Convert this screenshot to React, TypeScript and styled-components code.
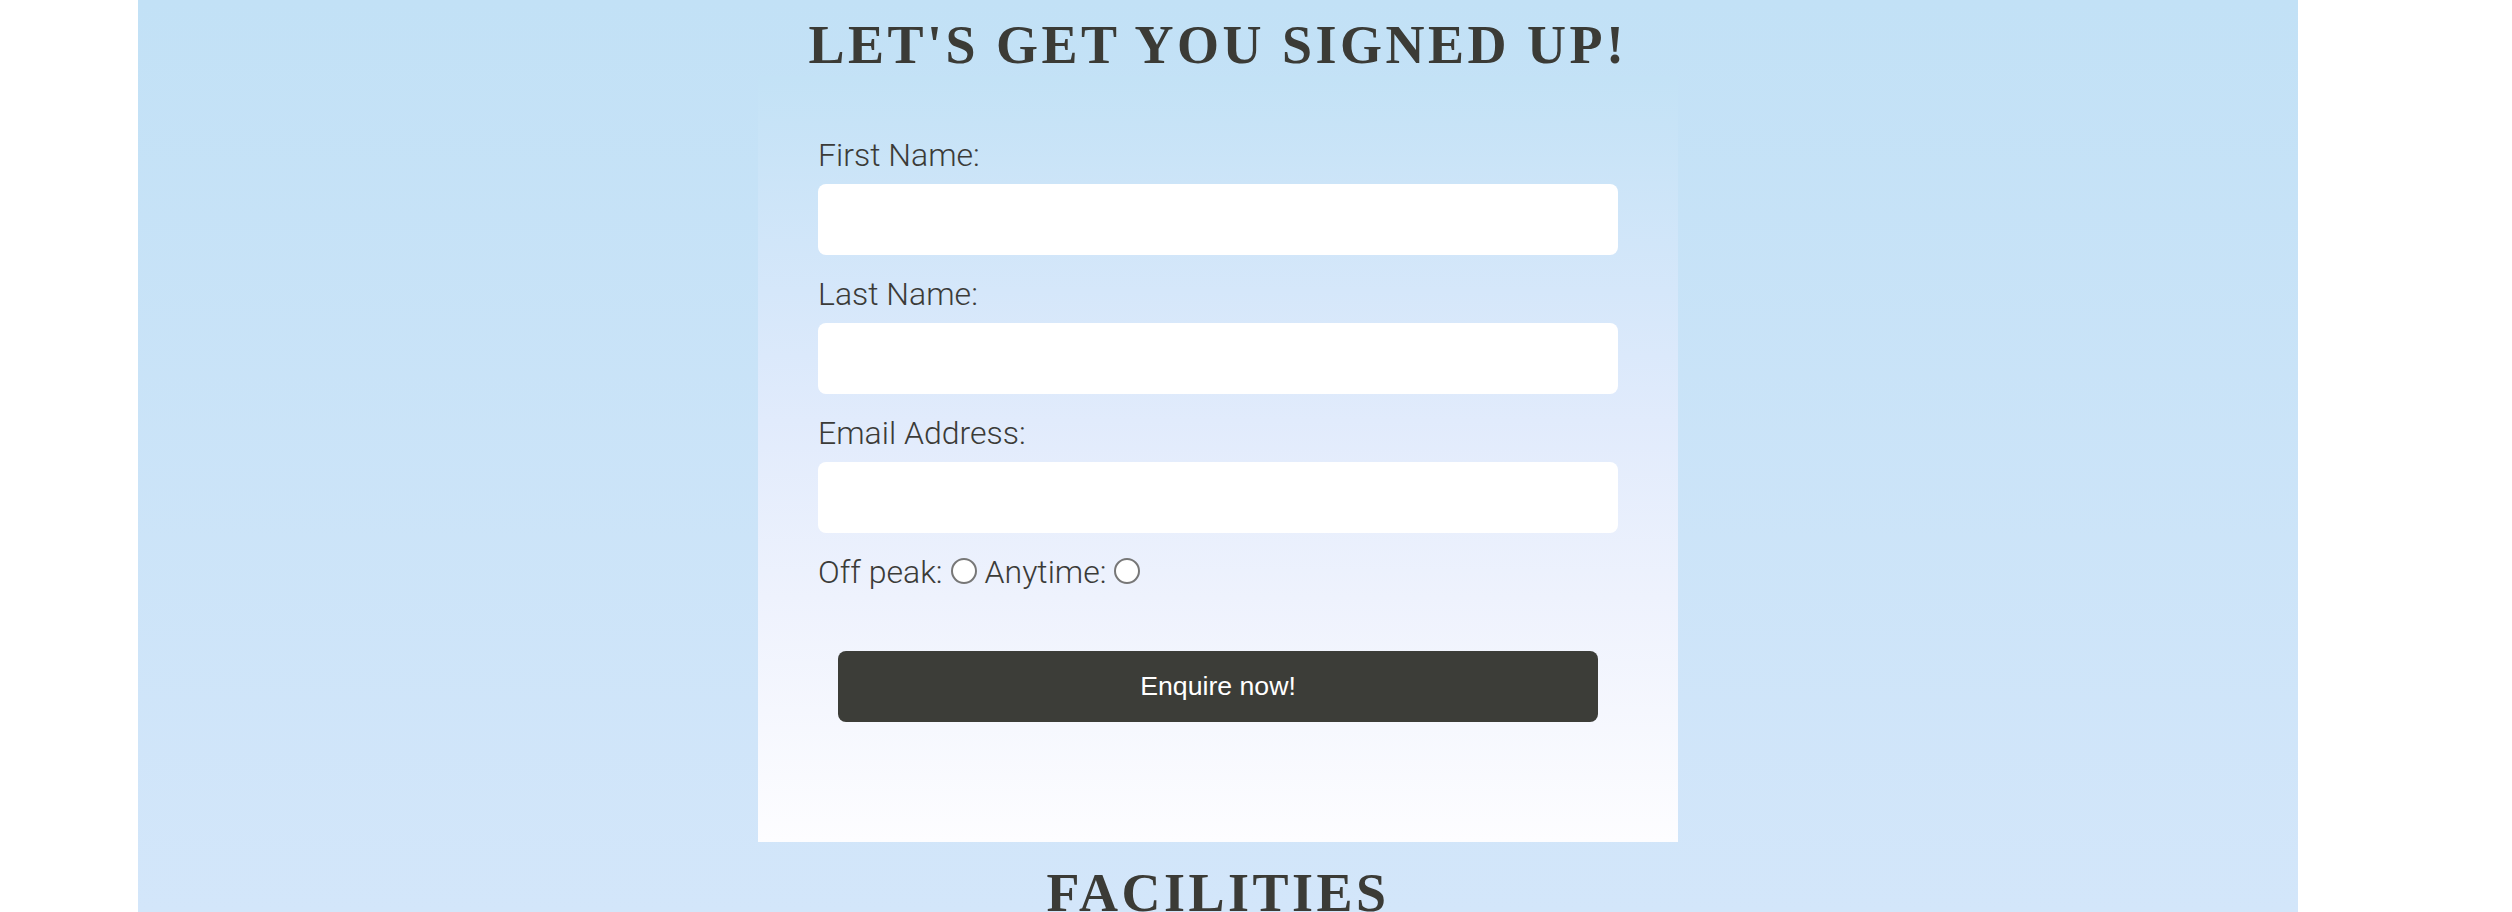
import React from "react";
import styled, { createGlobalStyle } from "styled-components";

const GlobalStyle = createGlobalStyle`
  html, body {
    margin: 0;
    padding: 0;
    background: #ffffff;
  }
  body {
    font-family: "Roboto", "Liberation Sans", sans-serif;
  }
  * { box-sizing: border-box; }
`;

const Page = styled.div`
  display: flex;
  width: 100%;
  min-height: 912px;
`;

const Panel = styled.main`
  margin-left: 138px;
  width: 2160px;
  min-height: 912px;
  padding-top: 14px;
  display: flex;
  flex-direction: column;
  align-items: center;
  background: linear-gradient(180deg, #c2e1f6 0px, #d3e6fa 912px);
`;

const SectionTitle = styled.h2`
  margin: 0;
  font-family: "Liberation Serif", "Times New Roman", serif;
  font-weight: 700;
  font-size: 54px;
  line-height: 1.15;
  letter-spacing: 3.5px;
  color: #3b3b36;
  text-align: center;
  text-transform: uppercase;
`;

const Form = styled.form`
  width: 920px;
  margin: 0 0 20px;
  padding: 60px 60px 120px;
  display: flex;
  flex-direction: column;
  background: linear-gradient(
    180deg,
    #c3e2f6 0%,
    #d5e7fa 28%,
    #e1ebfc 45%,
    #eef2fd 68%,
    #fdfdff 100%
  );
`;

const Field = styled.div`
  display: flex;
  flex-direction: column;
  gap: 10px;
  margin-bottom: 20px;
`;

const Label = styled.label`
  font-family: "Roboto", "Liberation Sans", sans-serif;
  font-weight: 300;
  font-size: 32px;
  line-height: 38px;
  color: #3b3b38;
`;

const TextInput = styled.input`
  width: 100%;
  height: 71px;
  border: none;
  border-radius: 8px;
  background: #ffffff;
  padding: 0 16px;
  font-size: 28px;
  outline: none;
`;

const RadioRow = styled.div`
  display: flex;
  align-items: center;
  gap: 8px;
  height: 38px;
  margin-bottom: 60px;
`;

const Option = styled.label`
  display: flex;
  align-items: center;
  gap: 8px;
  font-family: "Roboto", "Liberation Sans", sans-serif;
  font-weight: 300;
  font-size: 32px;
  line-height: 38px;
  color: #3b3b38;
`;

const Radio = styled.input`
  appearance: none;
  -webkit-appearance: none;
  margin: -2px 0 0;
  width: 26px;
  height: 26px;
  border: 2px solid #777777;
  border-radius: 50%;
  background: #ffffff;
`;

const SubmitButton = styled.button`
  margin: 0 20px;
  height: 71px;
  border: none;
  border-radius: 8px;
  background: #3c3d38;
  color: #ffffff;
  font-family: "Liberation Sans", Arial, sans-serif;
  font-size: 26.67px;
  cursor: pointer;
`;

const fields = [
  { id: "first", label: "First Name:", type: "text" },
  { id: "last", label: "Last Name:", type: "text" },
  { id: "email", label: "Email Address:", type: "email" },
];

export default function App() {
  return (
    <>
      <GlobalStyle />
      <Page>
        <Panel>
          <SectionTitle>Let's get you signed up!</SectionTitle>
          <Form onSubmit={(e) => e.preventDefault()}>
            {fields.map((f) => (
              <Field key={f.id}>
                <Label htmlFor={f.id}>{f.label}</Label>
                <TextInput id={f.id} type={f.type} />
              </Field>
            ))}
            <RadioRow>
              <Option>
                Off peak:
                <Radio type="radio" name="plan" value="offpeak" />
              </Option>
              <Option>
                Anytime:
                <Radio type="radio" name="plan" value="anytime" />
              </Option>
            </RadioRow>
            <SubmitButton type="submit">Enquire now!</SubmitButton>
          </Form>
          <SectionTitle>Facilities</SectionTitle>
        </Panel>
      </Page>
    </>
  );
}
